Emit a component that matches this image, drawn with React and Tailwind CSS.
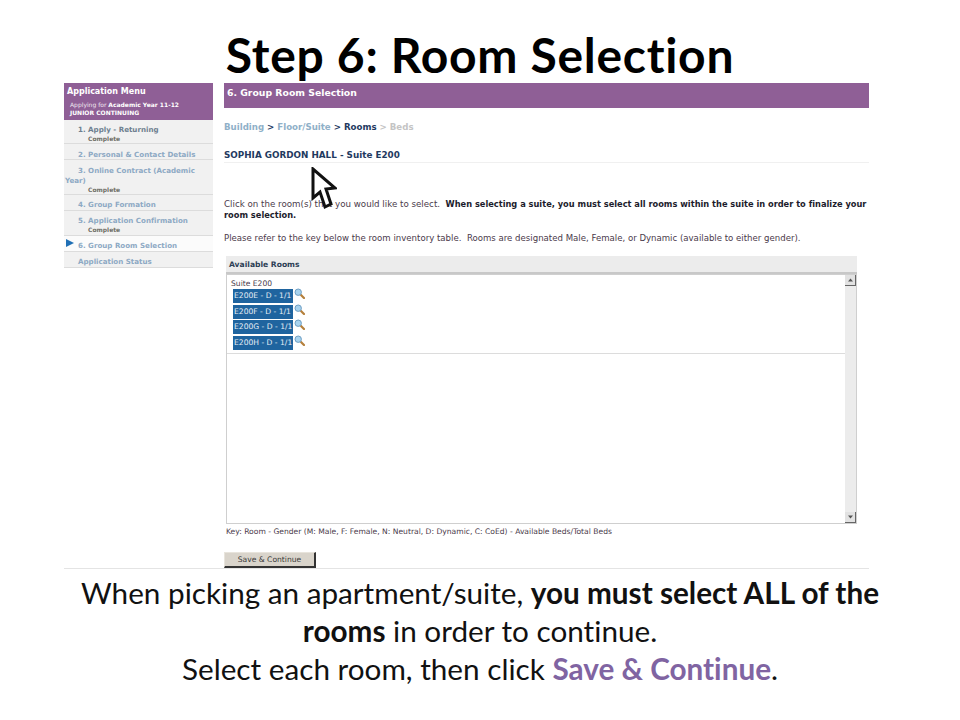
import React from "react";

const verdana = "font-['DejaVu_Sans',Verdana,sans-serif]";

function MenuItem({ children, sub, active, h, pt }) {
  return (
    <div className={`${h} ${pt} relative border-b border-[#dcdcdc] ${active ? "bg-[#fbfbfb]" : "bg-[#f1f1f1]"} px-[1px]`}>
      {active && (
        <svg className="absolute left-[2px] top-[3px]" width="8" height="8" viewBox="0 0 8 8">
          <path d="M0 0 L8 4 L0 8 Z" fill="#1f6fb5" />
        </svg>
      )}
      <div className="text-[7.1px] leading-[10px] font-bold text-[#8da9c4] indent-[13px]">{children}</div>
      {sub && <div className="pl-[23px] text-[6px] leading-[7px] font-bold text-[#6f6f66]">{sub}</div>}
    </div>
  );
}

function Room({ name }) {
  return (
    <div className="flex items-start h-[15.5px]">
      <div className="ml-[2px] h-[14px] w-[60px] bg-[#1f649f] text-[#e6eef5] text-[7.6px] leading-[14px] pl-[1px] whitespace-nowrap">{name}</div>
      <svg className="ml-[1px] -mt-[1px]" width="11" height="11" viewBox="0 0 11 11">
        <line x1="6.5" y1="6.5" x2="10" y2="10" stroke="#b5803c" strokeWidth="2.2" strokeLinecap="round" />
        <circle cx="4.2" cy="4.2" r="3.2" fill="#a9d3ee" stroke="#6f9fc4" strokeWidth="1" />
      </svg>
    </div>
  );
}

export default function App() {
  return (
    <div className="relative w-[960px] h-[720px] bg-white overflow-hidden font-['Lato',sans-serif] text-black [font-variant-ligatures:none]">
      <h1 className="h-[83px] pt-[27px] text-center text-[48px] leading-[56px] font-bold whitespace-nowrap tracking-[0.7px]">Step 6: Room Selection</h1>

      <div className={`mx-[64px] w-[805px] h-[486px] flex border-b border-[#e4e4e4] ${verdana}`}>
        <aside className="w-[149px] shrink-0">
          <div className="h-[37px] bg-[#8f5f96] text-white px-[3px] pt-[4px]">
            <div className="text-[8px] leading-[10px] font-bold">Application Menu</div>
            <div className="pl-[3px] pt-[4px] text-[6px] leading-[8px] text-[#efe6f0]">Applying for <b className="text-white">Academic Year 11-12</b></div>
            <div className="pl-[3px] text-[6px] leading-[8px] font-bold">JUNIOR CONTINUING</div>
          </div>
          <MenuItem h="h-[24px]" pt="pt-[5px]" sub="Complete"><span className="text-[#6d7f8f]">1. Apply - Returning</span></MenuItem>
          <MenuItem h="h-[16px]" pt="pt-[6px]">2. Personal &amp; Contact Details</MenuItem>
          <MenuItem h="h-[35px]" pt="pt-[6px]" sub="Complete">3. Online Contract (Academic Year)</MenuItem>
          <MenuItem h="h-[16px]" pt="pt-[5px]">4. Group Formation</MenuItem>
          <MenuItem h="h-[25px]" pt="pt-[5px]" sub="Complete">5. Application Confirmation</MenuItem>
          <MenuItem h="h-[16px]" pt="pt-[5px]" active>6. Group Room Selection</MenuItem>
          <MenuItem h="h-[16px]" pt="pt-[5px]">Application Status</MenuItem>
        </aside>

        <main className="ml-[11px] w-[645px] flex flex-col">
          <div className="h-[25px] bg-[#8f5f96] text-white text-[9.3px] font-bold leading-[12px] px-[3px] pt-[4px]">6. Group Room Selection</div>

          <div className="mt-[13px] text-[8.65px] leading-[12px] font-bold text-[#8fb0c8] whitespace-nowrap">
            Building <span className="text-[#1f3a5f]">&gt;</span> Floor/Suite <span className="text-[#1f3a5f]">&gt; Rooms</span> <span className="text-[#c4c4c4]">&gt; Beds</span>
          </div>

          <div className="mt-[17px] h-[13px] border-b border-[#f0f0f0] text-[8.8px] leading-[11px] font-bold text-[#1f3a5f] whitespace-nowrap">SOPHIA GORDON HALL - Suite E200</div>

          <p className="mt-[36px] text-[8.7px] leading-[11px] text-[#4a3a4a]">
            Click on the room(s) that you would like to select.&nbsp; <b className="text-[8.25px] text-[#1c1c2c]">When selecting a suite, you must select all rooms within the suite in order to finalize your room selection.</b>
          </p>
          <p className="mt-[12px] text-[8.58px] leading-[11px] text-[#4a3a4a] whitespace-nowrap">
            Please refer to the key below the room inventory table.&nbsp; Rooms are designated Male, Female, or Dynamic (available to either gender).
          </p>

          <section className="mt-[12px] ml-[2px] w-[631px]">
            <div className="h-[18px] bg-[#ececec] border-b-2 border-[#c8c8c8] text-[7.6px] font-bold leading-[10px] text-[#2c3f55] px-[3px] pt-[4px]">Available Rooms</div>
            <div className="h-[250px] border border-[#cfcfcf] flex">
              <div className="flex-1 min-w-0">
                <div className="h-[79px] border-b border-[#dcdcdc] pl-[4px] pt-[4px]">
                  <div className="text-[7.6px] leading-[10px] text-[#4a3a4a]">Suite E200</div>
                  <Room name="E200E - D - 1/1" />
                  <Room name="E200F - D - 1/1" />
                  <Room name="E200G - D - 1/1" />
                  <Room name="E200H - D - 1/1" />
                </div>
              </div>
              <div className="w-[11px] bg-[#ececec] flex flex-col justify-between">
                <div className="h-[11px] bg-[#e2e2e2] border-r border-b border-[#666] flex items-center justify-center">
                  <svg width="5" height="4" viewBox="0 0 5 4"><path d="M2.5 0.5 L5 3.5 L0 3.5 Z" fill="#555" /></svg>
                </div>
                <div className="h-[11px] bg-[#e2e2e2] border-r border-b border-[#666] flex items-center justify-center">
                  <svg width="5" height="4" viewBox="0 0 5 4"><path d="M0 0.5 L5 0.5 L2.5 3.5 Z" fill="#555" /></svg>
                </div>
              </div>
            </div>
          </section>

          <div className="mt-[3px] ml-[2px] text-[7.6px] leading-[10px] text-[#4a3a4a] whitespace-nowrap">Key: Room - Gender (M: Male, F: Female, N: Neutral, D: Dynamic, C: CoEd) - Available Beds/Total Beds</div>

          <button className="mt-[15px] w-[92px] h-[16px] bg-[#d9d4cb] border border-[#e8e4dc] border-r-2 border-b-2 border-r-[#333] border-b-[#333] text-[7.6px] leading-[12px] text-[#3a3a3a]">Save &amp; Continue</button>
        </main>
      </div>

      <div className="pt-[5px] text-center text-[29.7px] leading-[38px] text-[#111]">
        <div>When picking an apartment/suite, <b>you must select ALL of the</b></div>
        <div><b>rooms</b> in order to continue.</div>
        <div>Select each room, then click <b className="text-[#8064a2]">Save &amp; Continue</b>.</div>
      </div>

      <svg className="absolute left-[311px] top-[167px]" width="26" height="44" viewBox="0 0 26 44">
        <path d="M2 2 L2 31 L9 25 L14 40 L20 37 L15 22 L24 21 Z" fill="#fff" stroke="#111" strokeWidth="3" strokeLinejoin="miter" />
      </svg>
    </div>
  );
}
